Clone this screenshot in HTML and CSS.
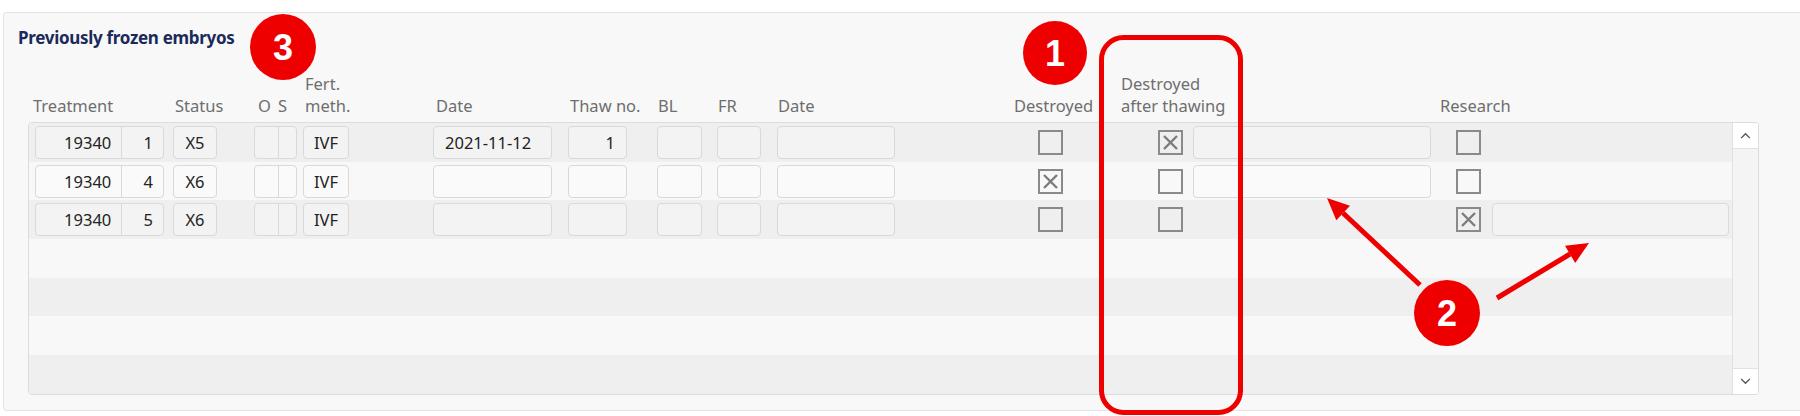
FILE: index.html
```html
<!DOCTYPE html>
<html lang="en">
<head>
    <meta charset="UTF-8">
    <title>Previously frozen embryos</title>
    <link rel="stylesheet" href="styles.css">
</head>
<body>
    <div class="panel">
        <div class="title">Previously frozen embryos</div>

        <div class="table">
            <div class="head">
                <div class="h h-treat">Treatment</div>
                <div class="h h-status">Status</div>
                <div class="h h-o">O</div>
                <div class="h h-s">S</div>
                <div class="h h-fert">Fert.<br>meth.</div>
                <div class="h h-date">Date</div>
                <div class="h h-thaw">Thaw no.</div>
                <div class="h h-bl">BL</div>
                <div class="h h-fr">FR</div>
                <div class="h h-date2">Date</div>
                <div class="h h-destroyed">Destroyed</div>
                <div class="h h-after">Destroyed<br>after thawing</div>
                <div class="h h-research">Research</div>
            </div>

            <div class="grid">
                <div class="rows">
                    <div class="row">
                        <div class="box pair"><span class="treat">19340</span><span class="num">1</span></div>
                        <div class="box status">X5</div>
                        <div class="box os"><span></span><span></span></div>
                        <div class="box fert">IVF</div>
                        <div class="box date">2021-11-12</div>
                        <div class="box thaw">1</div>
                        <div class="box bl"></div>
                        <div class="box fr"></div>
                        <div class="box date2"></div>
                        <div class="cb cb-destroyed"></div>
                        <div class="cb cb-after checked"><svg viewBox="0 0 21 21"><path d="M4 4L17 17M17 4L4 17"/></svg></div>
                        <div class="box note"></div>
                        <div class="cb cb-research"></div>
                    </div>
                    <div class="row">
                        <div class="box pair"><span class="treat">19340</span><span class="num">4</span></div>
                        <div class="box status">X6</div>
                        <div class="box os"><span></span><span></span></div>
                        <div class="box fert">IVF</div>
                        <div class="box date"></div>
                        <div class="box thaw"></div>
                        <div class="box bl"></div>
                        <div class="box fr"></div>
                        <div class="box date2"></div>
                        <div class="cb cb-destroyed checked"><svg viewBox="0 0 21 21"><path d="M4 4L17 17M17 4L4 17"/></svg></div>
                        <div class="cb cb-after"></div>
                        <div class="box note"></div>
                        <div class="cb cb-research"></div>
                    </div>
                    <div class="row">
                        <div class="box pair"><span class="treat">19340</span><span class="num">5</span></div>
                        <div class="box status">X6</div>
                        <div class="box os"><span></span><span></span></div>
                        <div class="box fert">IVF</div>
                        <div class="box date"></div>
                        <div class="box thaw"></div>
                        <div class="box bl"></div>
                        <div class="box fr"></div>
                        <div class="box date2"></div>
                        <div class="cb cb-destroyed"></div>
                        <div class="cb cb-after"></div>
                        <div class="note empty"></div>
                        <div class="cb cb-research checked"><svg viewBox="0 0 21 21"><path d="M4 4L17 17M17 4L4 17"/></svg></div>
                        <div class="box research-note"></div>
                    </div>
                    <div class="row"></div>
                    <div class="row"></div>
                    <div class="row"></div>
                    <div class="row"></div>
                </div>
                <div class="scrollbar">
                    <div class="sb-btn"><svg viewBox="0 0 12 8"><path d="M1 7L6 2L11 7"/></svg></div>
                    <div class="sb-track"></div>
                    <div class="sb-btn"><svg viewBox="0 0 12 8"><path d="M1 1L6 6L11 1"/></svg></div>
                </div>
            </div>
        </div>
    </div>

    <!-- annotation layer drawn over the screenshot -->
    <svg class="marks" viewBox="0 0 1800 416">
        <rect x="1101.5" y="37.5" width="139" height="375" rx="22" class="frame"/>
        <line x1="1420" y1="285" x2="1343" y2="213" class="arrow"/>
        <polygon points="1327,198 1350,205.7 1336.3,220.3" class="head"/>
        <line x1="1497" y1="298" x2="1570" y2="254" class="arrow"/>
        <polygon points="1589,243 1575.2,262.9 1565,245.7" class="head"/>
        <circle cx="283" cy="47" r="33" class="badge"/>
        <text x="283" y="60" class="badge-num">3</text>
        <circle cx="1055" cy="53" r="32" class="badge"/>
        <text x="1055" y="66" class="badge-num">1</text>
        <circle cx="1447" cy="313" r="33" class="badge"/>
        <text x="1447" y="326" class="badge-num">2</text>
    </svg>
</body>
</html>
```

FILE: styles.css
```css
body {
    margin: 0;
    background: #ffffff;
    font-family: "Noto Sans", "Open Sans", sans-serif;
    position: relative;
    width: 1800px;
    height: 416px;
    overflow: hidden;
}
.panel {
    margin: 12px 0 0 3px;
    height: 397px;
    background: #f8f8f8;
    border: 1px solid #e3e3e3;
    border-right: none;
    border-radius: 4px 0 0 4px;
}
.title {
    margin: 15px 0 0 14px;
    font-size: 17px;
    font-weight: bold;
    line-height: 20px;
    color: #1b2a5a;
    letter-spacing: -0.3px;
}
.table {
    margin-left: 24px;
}
.head {
    display: flex;
    align-items: flex-end;
    margin-top: 25px;
    padding: 0 0 5px 5px;
    font-size: 16.5px;
    line-height: 22px;
    color: #6e6e6e;
    white-space: nowrap;
}
.h-treat { width: 142px; }
.h-status { width: 83px; }
.h-o { width: 20px; }
.h-s { width: 27px; }
.h-fert { width: 131px; }
.h-date { width: 134px; }
.h-thaw { width: 88px; }
.h-bl { width: 60px; }
.h-fr { width: 60px; }
.h-date2 { width: 236px; }
.h-destroyed { width: 107px; }
.h-after { width: 319px; }
.grid {
    display: flex;
    width: 1731px;
    box-sizing: border-box;
    border: 1px solid #dcdcdc;
    border-radius: 4px;
    overflow: hidden;
}
.rows {
    width: 1704px;
}
.row {
    display: flex;
    align-items: center;
    height: 38.7px;
    background: #f8f8f8;
}
.row:nth-child(odd) {
    background: #efefef;
}
.box {
    box-sizing: border-box;
    height: 33px;
    border: 1px solid #d9d9d9;
    border-radius: 4px;
    background: rgba(255, 255, 255, 0.25);
    font-size: 16.5px;
    line-height: 31px;
    color: #222222;
    padding: 0 11px;
    white-space: nowrap;
}
.pair {
    display: flex;
    margin-left: 6px;
    width: 129px;
    padding: 0;
}
.pair .treat {
    width: 87px;
    box-sizing: border-box;
    padding-right: 10px;
    text-align: right;
    border-right: 1px solid #d9d9d9;
}
.pair .num {
    width: 41px;
    box-sizing: border-box;
    padding-right: 10px;
    text-align: right;
}
.status { margin-left: 9px; width: 44px; padding: 0; text-align: center; }
.os {
    display: flex;
    margin-left: 37px;
    width: 43px;
    padding: 0;
}
.os span:first-child {
    width: 23px;
    border-right: 1px solid #d9d9d9;
}
.fert { margin-left: 6px; width: 46px; padding: 0; text-align: center; }
.date { margin-left: 84px; width: 119px; }
.thaw { margin-left: 16px; width: 59px; text-align: right; }
.bl { margin-left: 30px; width: 45px; }
.fr { margin-left: 15px; width: 44px; }
.date2 { margin-left: 16px; width: 118px; }
.note { margin-left: 10px; width: 238px; }
.note.empty { height: 33px; }
.research-note { margin-left: 11px; width: 237px; }
.cb {
    box-sizing: border-box;
    width: 25px;
    height: 25px;
    border: 2px solid #8a8a8a;
}
.cb svg {
    display: block;
    width: 21px;
    height: 21px;
}
.cb path {
    stroke: #7c7c7c;
    stroke-width: 2.4;
    fill: none;
}
.cb-destroyed { margin-left: 143px; }
.cb-after { margin-left: 95px; }
.cb-research { margin-left: 25px; }
.scrollbar {
    display: flex;
    flex-direction: column;
    width: 25px;
    border-left: 1px solid #e2e2e2;
    background: #f4f4f4;
}
.sb-btn {
    height: 25px;
    background: #ffffff;
    display: flex;
    align-items: center;
    justify-content: center;
}
.sb-btn:first-child { border-bottom: 1px solid #e2e2e2; }
.sb-btn:last-child { border-top: 1px solid #e2e2e2; }
.sb-btn svg {
    width: 11px;
    height: 7px;
}
.sb-btn path {
    stroke: #555555;
    stroke-width: 1.6;
    fill: none;
}
.sb-track {
    flex: 1;
}
.marks {
    position: absolute;
    left: 0;
    top: 0;
    width: 1800px;
    height: 416px;
}
.frame {
    fill: none;
    stroke: #ee0000;
    stroke-width: 5;
}
.arrow {
    stroke: #ee0000;
    stroke-width: 5;
}
.head {
    fill: #ee0000;
}
.badge {
    fill: #ee0000;
}
.badge-num {
    fill: #ffffff;
    font-family: "Liberation Sans", Arial, sans-serif;
    font-weight: bold;
    font-size: 36px;
    text-anchor: middle;
}
```
